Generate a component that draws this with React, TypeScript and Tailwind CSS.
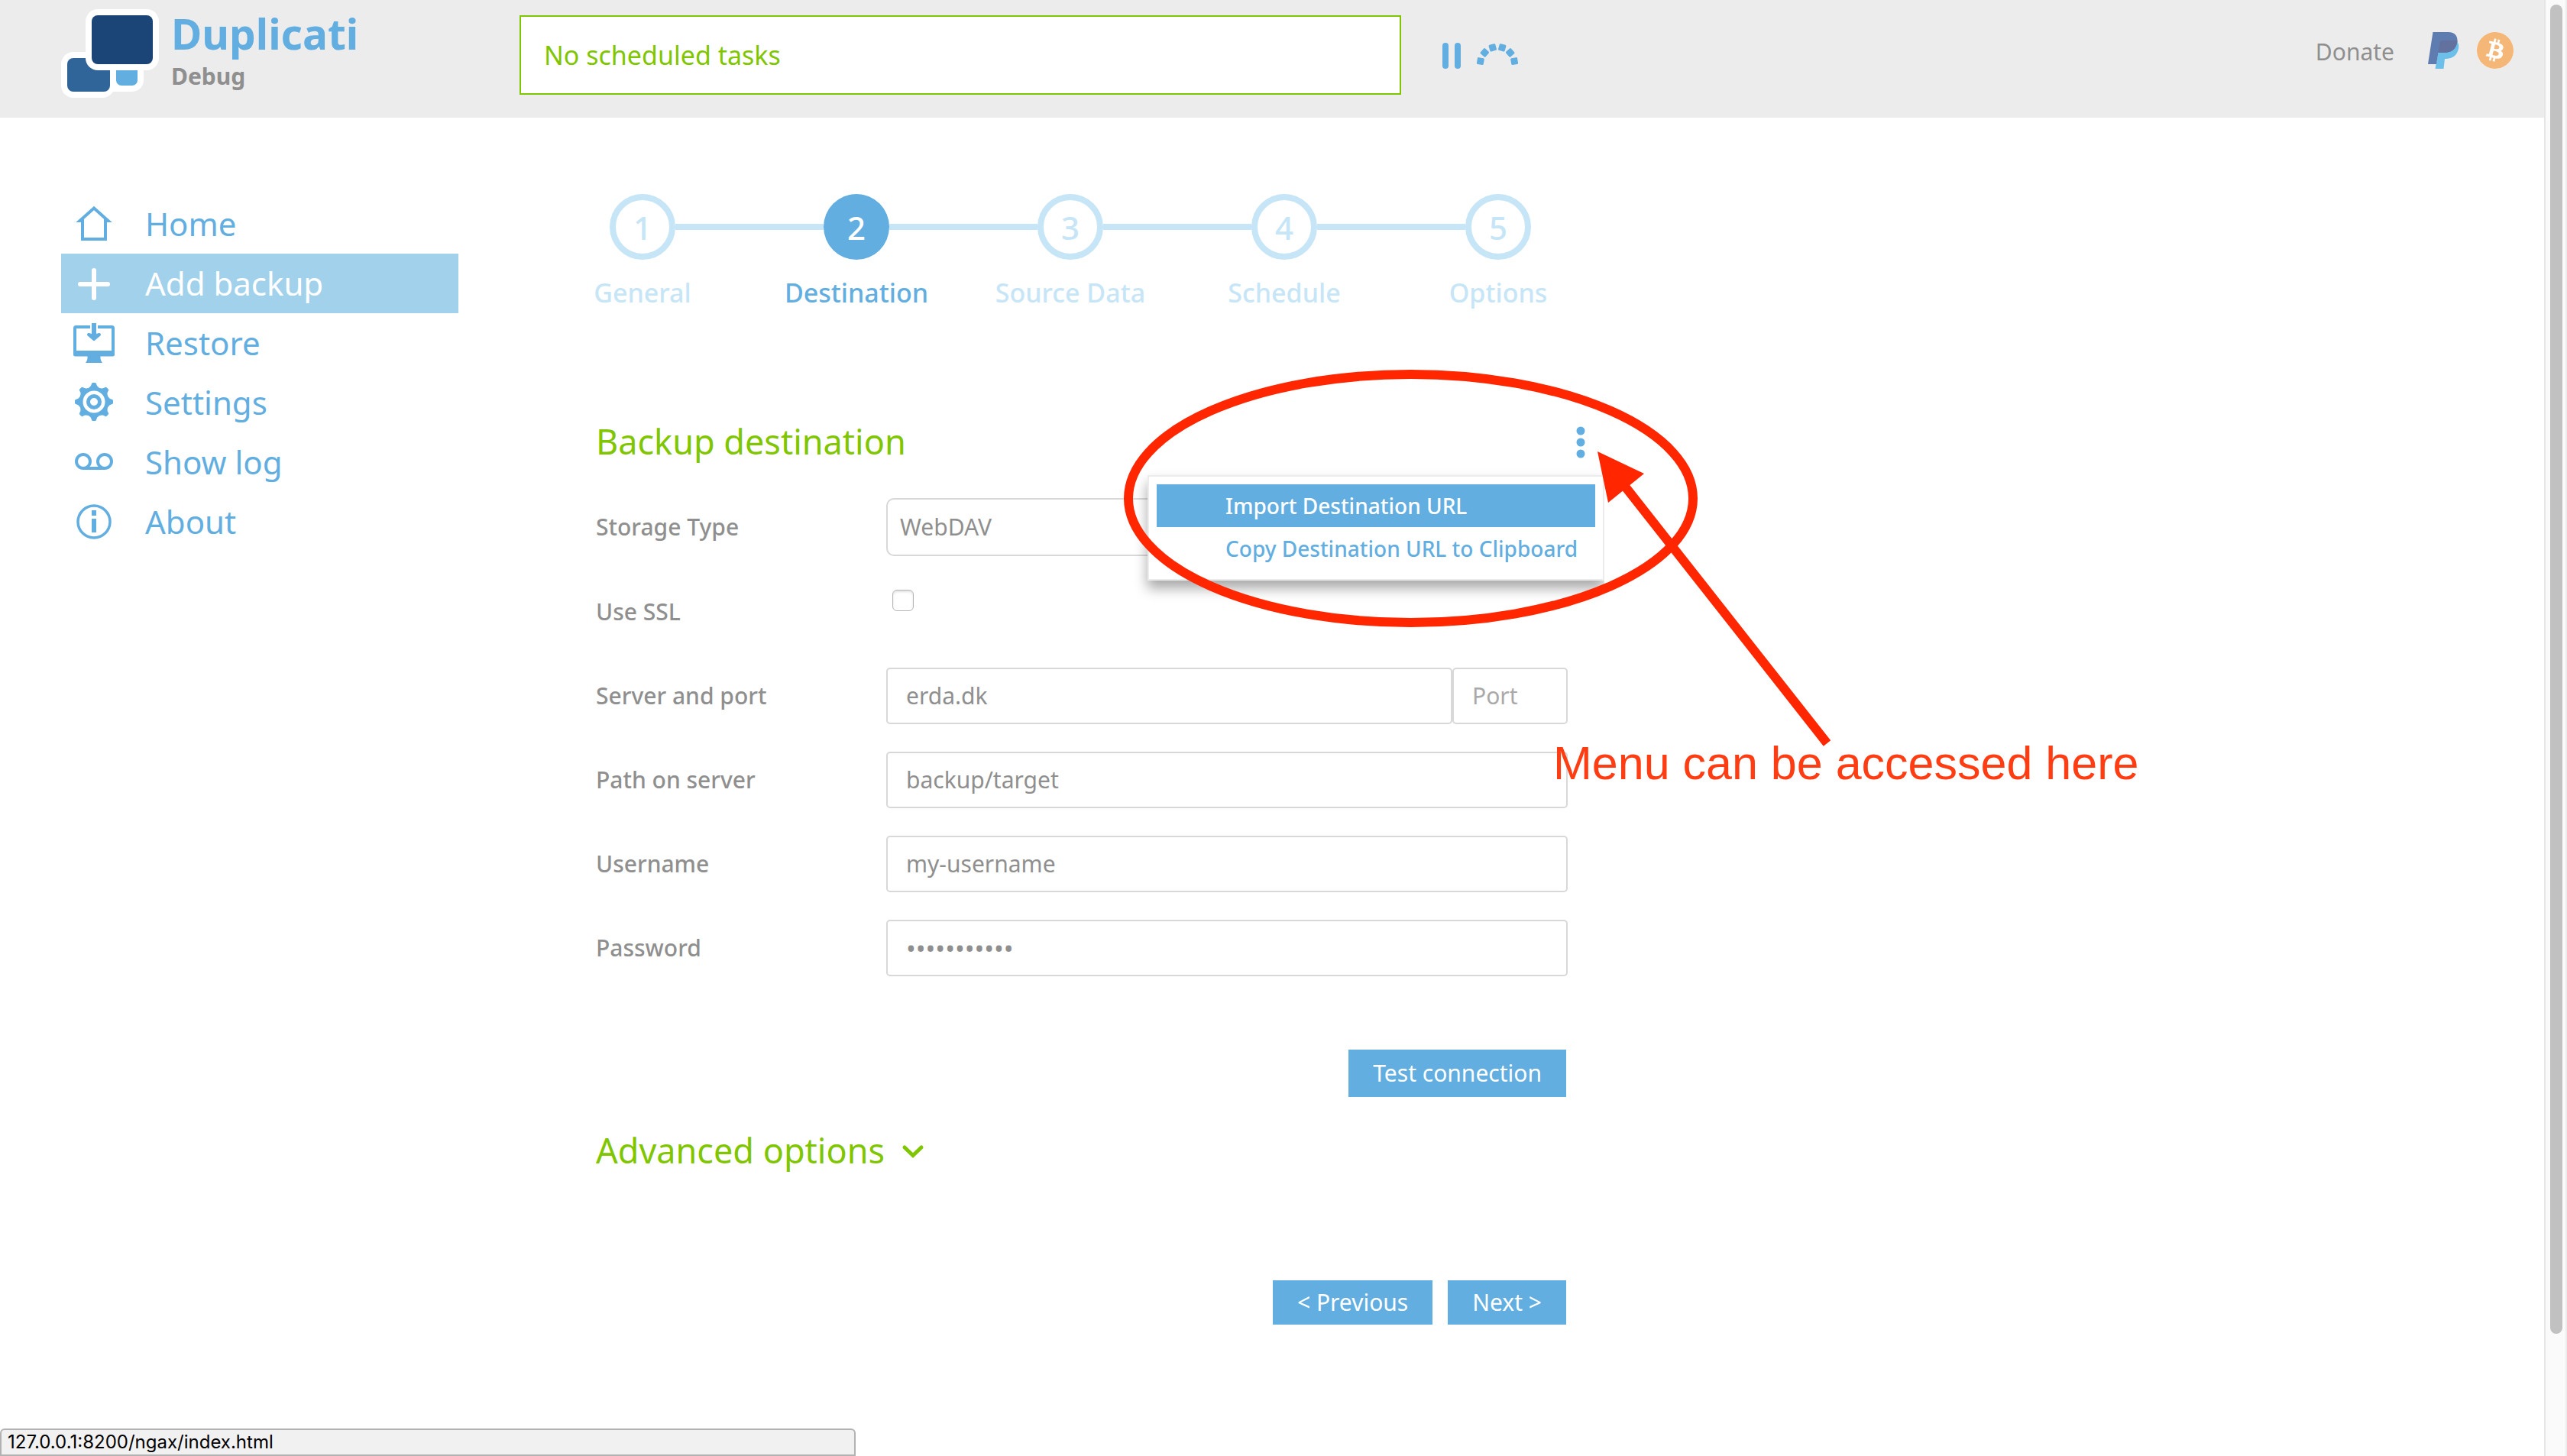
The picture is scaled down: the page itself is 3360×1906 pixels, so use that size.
import React from 'react';
import { SiBitcoin } from 'react-icons/si';

const Logo = () => (
  <svg width="128" height="116" viewBox="0 0 128 116" aria-hidden="true" className="shrink-0">
    <rect x="40" y="50" width="68" height="58" rx="15" fill="#fff" />
    <rect x="72" y="50" width="28" height="50" rx="7" fill="#62aee0" />
    <rect x="0" y="56" width="70" height="60" rx="16" fill="#fff" />
    <rect x="62" y="70" width="10" height="32" fill="#fff" />
    <rect x="8" y="64" width="56" height="44" rx="8" fill="#30659a" />
    <rect x="32" y="0" width="96" height="80" rx="16" fill="#fff" />
    <rect x="40" y="8" width="80" height="64" rx="8" fill="#1b4576" />
  </svg>
);

const PauseIcon = () => (
  <svg width="26" height="36" viewBox="0 0 26 36" aria-hidden="true">
    <rect x="1" y="0" width="8" height="34" rx="4" fill="#62aee0" />
    <rect x="17" y="0" width="8" height="34" rx="4" fill="#62aee0" />
  </svg>
);

const ThrottleIcon = () => (
  <svg width="54" height="30" viewBox="0 0 54 30" aria-hidden="true">
    <g fill="#62aee0" transform="translate(27 28)">
      {[-80, -48, -16, 16, 48, 80].map((angle) => (
        <rect key={angle} x="-4.500" y="-27" width="9" height="9" rx="1.500" transform={`rotate(${angle})`} />
      ))}
    </g>
  </svg>
);

const PayPalIcon = () => (
  <svg width="48" height="48" viewBox="0 0 48 48" aria-hidden="true">
    <path d="M20 11H41C45 15 45 20 43 25C40 33 33 35 26 35L24.5 48H13.5L17.5 27Z" fill="#6cbfe8" />
    <path d="M10.5 0H31C38 0 43 4 42.5 12C41 24 33 27 24 27H17.5L15 42H4Z" fill="#5f7cb1" />
    <path d="M23 11H42.5C41 24 33 27 24 27H17.5L19.5 14Q20 11 23 11Z" fill="#62719d" />
  </svg>
);

const iconProps = {
  width: 54,
  height: 52,
  viewBox: '0 0 54 52',
  fill: 'none',
  stroke: 'currentColor',
  'aria-hidden': true,
  className: 'shrink-0',
} as const;

const HomeIcon = () => (
  <svg {...iconProps} strokeWidth="4">
    <path d="M27 5.5L8.5 22H12V46H42V22H45.500Z" />
  </svg>
);

const PlusIcon = () => (
  <svg {...iconProps} strokeWidth="6" strokeLinecap="round">
    <path d="M27 9V45M9 27H45" />
  </svg>
);

const RestoreIcon = () => (
  <svg {...iconProps} strokeWidth="4">
    <path d="M22 5H3.500Q2 5 2 6.500V39H52V6.500Q52 5 50.500 5H32" />
    <path d="M0 36H54V41Q54 43.500 51.500 43.500H35.500Q35 48 38 52H16Q19 48 18.500 43.500H2.500Q0 43.500 0 41Z" fill="currentColor" stroke="none" />
    <path d="M27 0V16" strokeWidth="6" />
    <path d="M20 15L27 21L34 15L27 17Z" fill="currentColor" strokeLinejoin="round" />
  </svg>
);

const GearIcon = () => (
  <svg {...iconProps}>
    <g transform="translate(27 25)">
      <circle r="17" strokeWidth="5" />
      <circle r="7.500" strokeWidth="5" />
      {[0, 45, 90, 135, 180, 225, 270, 315].map((angle) => (
        <path
          key={angle}
          d="M-5.500 -17.500Q-2.500 -19 -1.500 -23.500H1.500Q2.500 -19 5.500 -17.500Z"
          fill="currentColor"
          strokeWidth="3"
          strokeLinejoin="round"
          transform={`rotate(${angle})`}
        />
      ))}
    </g>
  </svg>
);

const LogIcon = () => (
  <svg {...iconProps} strokeWidth="4">
    <circle cx="13" cy="25" r="9" />
    <circle cx="41" cy="25" r="9" />
    <path d="M13 34H41" />
  </svg>
);

const InfoIcon = () => (
  <svg {...iconProps} strokeWidth="3.500">
    <circle cx="27" cy="26" r="21" />
    <path d="M24 11H30V18H24ZM24 22H30V40H24Z" fill="currentColor" stroke="none" />
  </svg>
);

const nav = [
  { label: 'Home', Icon: HomeIcon },
  { label: 'Add backup', Icon: PlusIcon, active: true },
  { label: 'Restore', Icon: RestoreIcon },
  { label: 'Settings', Icon: GearIcon },
  { label: 'Show log', Icon: LogIcon },
  { label: 'About', Icon: InfoIcon },
];

const steps = ['General', 'Destination', 'Source Data', 'Schedule', 'Options'];

const fieldClass =
  'min-w-0 rounded-[5px] border-2 border-[#d8d8d8] bg-white px-6 py-3 leading-[46px] text-[#8f8f8f] outline-none placeholder:text-[#a9a9a9]';
const labelClass = 'w-[380px] shrink-0 font-medium';

function Header() {
  return (
    <header className="flex items-start bg-[#ececec] pt-3 pr-10 pb-[26px] pl-20">
      <a href="#home" className="flex w-[600px] shrink-0 gap-4">
        <Logo />
        <span className="flex flex-col font-bold">
          <span className="text-[55px] leading-[64px] text-[#62aee0]">Duplicati</span>
          <span className="text-[30px] leading-[48px] text-[#8f8f8f]">Debug</span>
        </span>
      </a>
      <div className="mt-2 w-[1154px] border-2 border-[#7fc600] bg-white px-[30px] py-[26px] text-[34px] leading-[48px] text-[#7fc600]">
        No scheduled tasks
      </div>
      <div className="mt-11 ml-[53px] flex items-start gap-5">
        <button type="button" aria-label="Pause">
          <PauseIcon />
        </button>
        <button type="button" aria-label="Throttle">
          <ThrottleIcon />
        </button>
      </div>
      <div className="mt-[30px] ml-auto flex items-center gap-5">
        <span className="mr-5 pt-1 text-[30px] leading-[44px] text-[#8f8f8f]">Donate</span>
        <a href="#paypal" aria-label="PayPal">
          <PayPalIcon />
        </a>
        <a href="#bitcoin" aria-label="Bitcoin" className="rounded-full bg-white">
          <SiBitcoin size={48} color="#f4b777" aria-hidden="true" />
        </a>
      </div>
    </header>
  );
}

function Sidebar() {
  return (
    <nav className="w-[520px] shrink-0">
      <ul>
        {nav.map(({ label, Icon, active }) => (
          <li key={label}>
            <a
              href="#nav"
              aria-current={active ? 'page' : undefined}
              className={
                active
                  ? 'flex items-center gap-10 bg-[#a2d1ec] px-4 py-[13px] text-[42px] leading-[52px] text-white'
                  : 'flex items-center gap-10 px-4 py-[13px] text-[42px] leading-[52px] text-[#62aee0]'
              }
            >
              <Icon />
              {label}
            </a>
          </li>
        ))}
      </ul>
    </nav>
  );
}

function Stepper() {
  return (
    <ol className="flex">
      {steps.map((step, i) => {
        const current = i === 1;
        return (
          <li key={step} className="flex w-[280px] flex-col items-center">
            <div className="flex w-full items-center">
              <span className={i === 0 ? 'h-2 flex-1' : 'h-2 flex-1 bg-[#c6e5f7]'} />
              <span
                className={
                  current
                    ? 'flex size-[86px] items-center justify-center rounded-full bg-[#62aee0] text-[42px] font-medium text-white'
                    : 'flex size-[86px] items-center justify-center rounded-full border-8 border-[#c6e5f7] text-[42px] font-medium text-[#c6e5f7]'
                }
              >
                {i + 1}
              </span>
              <span className={i === steps.length - 1 ? 'h-2 flex-1' : 'h-2 flex-1 bg-[#c6e5f7]'} />
            </div>
            <span
              className={
                current
                  ? 'mt-5 text-[34px] leading-[46px] font-medium text-[#62aee0]'
                  : 'mt-5 text-[34px] leading-[46px] font-medium text-[#c6e5f7]'
              }
            >
              {step}
            </span>
          </li>
        );
      })}
    </ol>
  );
}

function Annotation() {
  return (
    <div className="pointer-events-none">
      <svg
        width="930"
        height="500"
        viewBox="0 0 930 500"
        aria-hidden="true"
        className="absolute -top-16 left-[690px] z-20"
      >
        <ellipse cx="376.500" cy="168.500" rx="369.500" ry="162.500" fill="none" stroke="#ff2600" strokeWidth="12" />
        <path d="M658 154L921.500 489" stroke="#ff2600" strokeWidth="12" />
        <path d="M621 107L682 136L635 174Z" fill="#ff2600" />
      </svg>
      <p className="absolute top-[415px] left-[1253px] z-20 font-['Liberation_Sans',sans-serif] text-[61px] leading-[72px] whitespace-nowrap text-[#ff3c12]">
        Menu can be accessed here
      </p>
    </div>
  );
}

function DestinationForm() {
  return (
    <section className="relative mt-[142px] ml-[79px] w-[1320px]">
      <div className="flex items-center justify-between">
        <h2 className="text-[45px] leading-[60px] text-[#7fc600]">Backup destination</h2>
        <button type="button" aria-label="Destination menu" className="flex w-[62px] justify-center">
          <svg width="12" height="44" viewBox="0 0 12 44" fill="#62aee0" aria-hidden="true">
            <circle cx="6" cy="8" r="5.500" />
            <circle cx="6" cy="23" r="5.500" />
            <circle cx="6" cy="38" r="5.500" />
          </svg>
        </button>
      </div>

      <div
        role="menu"
        className="absolute top-[74px] right-0 z-10 w-[598px] border-2 border-[#ececec] bg-white p-2.5 pb-3 text-[28px] leading-[56px] font-medium shadow-[0_10px_16px_rgba(0,0,0,0.35)] [clip-path:inset(-20px_0px_-40px_-20px)]"
      >
        <button type="button" role="menuitem" className="block w-full bg-[#62aee0] pl-[90px] text-left text-white">
          Import Destination URL
        </button>
        <button type="button" role="menuitem" className="block w-full pl-[90px] text-left text-[#62aee0]">
          Copy Destination URL to Clipboard
        </button>
      </div>

      <form className="mt-11 text-[30px] leading-[46px] text-[#8f8f8f]" onSubmit={(e) => e.preventDefault()}>
        <div className="flex flex-col gap-9 pr-12">
          <div className="flex items-center">
            <label htmlFor="storage" className={labelClass}>
              Storage Type
            </label>
            <select
              id="storage"
              className="h-[76px] min-w-0 flex-1 appearance-none rounded-[10px] border-2 border-[#d8d8d8] bg-white px-4"
            >
              <option>WebDAV</option>
            </select>
          </div>
          <div className="flex">
            <label htmlFor="ssl" className="w-[380px] shrink-0 py-3.5 font-medium">
              Use SSL
            </label>
            <input
              id="ssl"
              type="checkbox"
              className="mt-2 ml-2 size-7 appearance-none rounded-md border border-[#b5b5b5] bg-white shadow-[inset_0_2px_3px_rgba(0,0,0,0.12)]"
            />
          </div>
          <div className="flex items-center">
            <label htmlFor="server" className={labelClass}>
              Server and port
            </label>
            <input id="server" defaultValue="erda.dk" className={`${fieldClass} flex-1`} />
            <input aria-label="Port" placeholder="Port" className={`${fieldClass} w-[151px]`} />
          </div>
          <div className="flex items-center">
            <label htmlFor="path" className={labelClass}>
              Path on server
            </label>
            <input id="path" defaultValue="backup/target" className={`${fieldClass} flex-1`} />
          </div>
          <div className="flex items-center">
            <label htmlFor="username" className={labelClass}>
              Username
            </label>
            <input id="username" defaultValue="my-username" className={`${fieldClass} flex-1`} />
          </div>
          <div className="flex items-center">
            <label htmlFor="password" className={labelClass}>
              Password
            </label>
            <input
              id="password"
              type="password"
              defaultValue="my-password"
              className={`${fieldClass} flex-1 text-[34px]`}
            />
          </div>
        </div>

        <div className="mt-24 flex justify-end pr-[50px]">
          <button type="button" className="bg-[#62aee0] px-8 py-2 text-white">
            Test connection
          </button>
        </div>

        <button type="button" className="mt-10 flex items-center gap-[22px] text-[45px] leading-[60px] text-[#7fc600]">
          Advanced options
          <svg width="30" height="22" viewBox="0 0 30 22" fill="none" aria-hidden="true" className="mt-1">
            <path d="M4 5L15 15.500L26 5" stroke="#7fc600" strokeWidth="5" strokeLinecap="round" />
          </svg>
        </button>

        <div className="mt-[140px] flex justify-end gap-5 pr-[50px]">
          <button type="button" className="bg-[#62aee0] px-8 py-1.5 text-white">
            &lt; Previous
          </button>
          <button type="submit" className="bg-[#62aee0] px-8 py-1.5 text-white">
            Next &gt;
          </button>
        </div>
      </form>

      <Annotation />
    </section>
  );
}

export default function App() {
  return (
    <div className="flex min-h-screen bg-white font-['Noto_Sans',sans-serif]">
      <div className="min-w-0 flex-1">
        <Header />
        <div className="flex pt-[100px] pl-20">
          <Sidebar />
          <main className="ml-[101px]">
            <Stepper />
            <DestinationForm />
          </main>
        </div>
      </div>

      <div className="w-[30px] shrink-0 border-x-2 border-l-[#e6e6e6] border-r-[#ececec] bg-[#fafafa] pt-1.5 pb-40 pl-1.5" aria-hidden="true">
        <div className="h-full w-4 rounded-full bg-[#c1c1c1]" />
      </div>

      <div className="fixed bottom-0 left-0 w-1/3 rounded-t-md border-2 border-[#b2b2b2] bg-[#f1f1f1] px-2 font-[Inter,sans-serif] text-[24px] leading-8 text-black">
        127.0.0.1:8200/ngax/index.html
      </div>
    </div>
  );
}
